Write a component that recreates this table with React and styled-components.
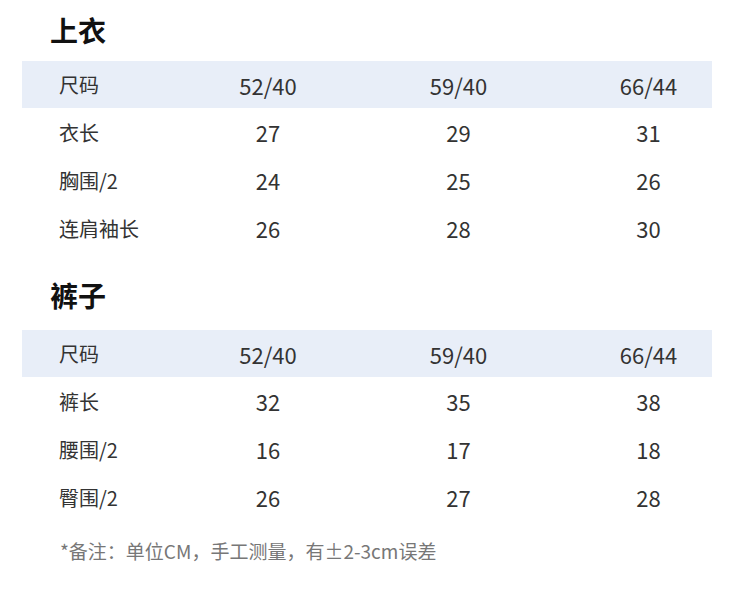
import React from "react";
import styled, { createGlobalStyle } from "styled-components";

const GlobalStyle = createGlobalStyle`
  body {
    margin: 0;
    background: #fff;
    font-family: "Noto Sans CJK SC", "Noto Sans", sans-serif;
    color: #333;
  }
`;

const Page = styled.div`
  width: 690px;
  margin-left: 22px;
`;

const Title = styled.h2`
  margin: ${(p) => (p.first ? "10px 0 11px" : "23px 0 15px")};
  padding-left: 28px;
  font-size: 28px;
  line-height: 40px;
  font-weight: 700;
  color: #111;
`;

const Row = styled.div`
  display: grid;
  grid-template-columns: 150px 192px 189px 1fr;
  align-items: center;
  height: ${(p) => (p.head ? "47px" : "48px")};
  background: ${(p) => (p.head ? "#e8eef8" : "transparent")};
  font-size: 20px;
  color: #333;
`;

const Label = styled.div`
  padding-left: 37px;
  white-space: nowrap;
`;

const Cell = styled.div`
  text-align: center;
  font-size: 22px;
  padding-left: ${(p) => (p.last ? "32px" : "0")};
`;

const Note = styled.p`
  margin: 16px 0 0;
  padding-left: 38px;
  font-size: 19px;
  line-height: 28px;
  color: #777;
`;

const sizes = ["52/40", "59/40", "66/44"];

const tables = [
  {
    title: "上衣",
    rows: [
      ["衣长", 27, 29, 31],
      ["胸围/2", 24, 25, 26],
      ["连肩袖长", 26, 28, 30],
    ],
  },
  {
    title: "裤子",
    rows: [
      ["裤长", 32, 35, 38],
      ["腰围/2", 16, 17, 18],
      ["臀围/2", 26, 27, 28],
    ],
  },
];

function SizeTable({ title, rows, first }) {
  return (
    <section>
      <Title first={first}>{title}</Title>
      <Row head>
        <Label>尺码</Label>
        {sizes.map((s, i) => (
          <Cell key={s} last={i === 2}>
            {s}
          </Cell>
        ))}
      </Row>
      {rows.map(([name, ...vals]) => (
        <Row key={name}>
          <Label>{name}</Label>
          {vals.map((v, i) => (
            <Cell key={i} last={i === 2}>
              {v}
            </Cell>
          ))}
        </Row>
      ))}
    </section>
  );
}

export default function App() {
  return (
    <Page>
      <GlobalStyle />
      {tables.map((t, i) => (
        <SizeTable key={t.title} title={t.title} rows={t.rows} first={i === 0} />
      ))}
      <Note>*备注：单位CM，手工测量，有±2-3cm误差</Note>
    </Page>
  );
}
